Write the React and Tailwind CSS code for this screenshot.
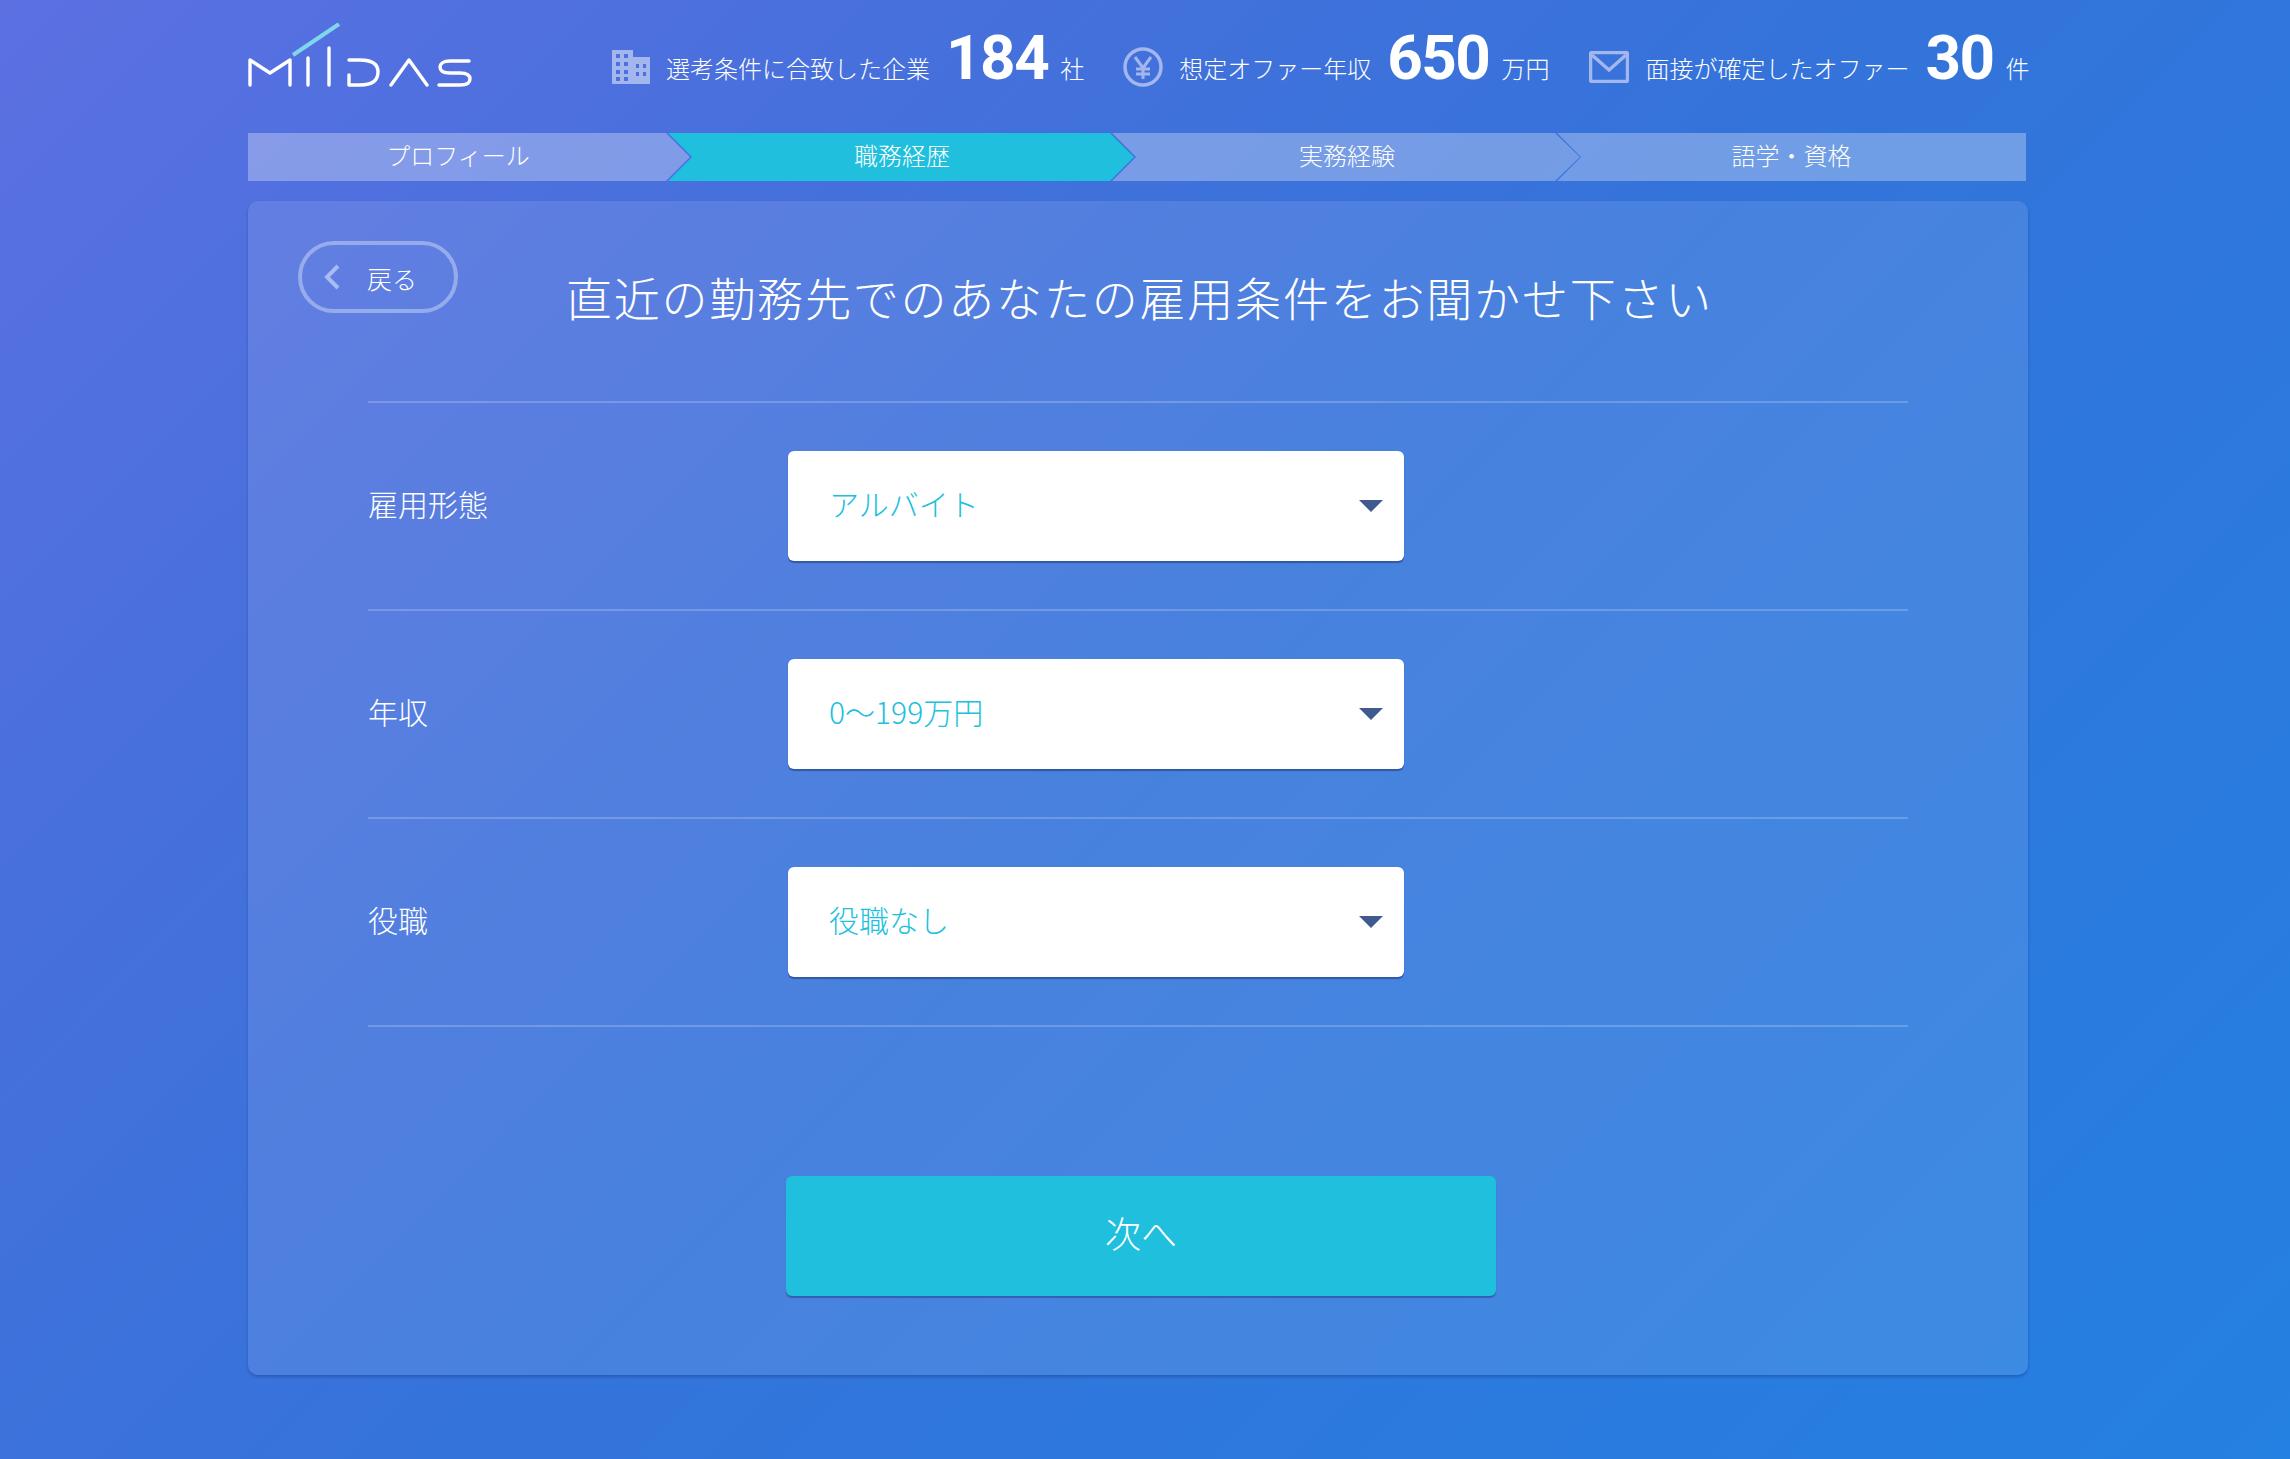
import React from 'react';

const steps = [
    { label: 'プロフィール', className: 'w-[444px] bg-white/30 pr-[24px] [clip-path:polygon(0_0,418px_0,442px_50%,418px_100%,0_100%)]' },
    { label: '職務経歴', className: 'w-[468px] -ml-[24px] bg-[#20bfdd] [clip-path:polygon(0_0,442px_0,466px_50%,442px_100%,0_100%,24px_50%)]' },
    { label: '実務経験', className: 'w-[470px] -ml-[24px] bg-white/30 [clip-path:polygon(0_0,443px_0,468px_50%,443px_100%,0_100%,24px_50%)]' },
    { label: '語学・資格', className: 'w-[469px] -ml-[25px] bg-white/30 [clip-path:polygon(0_0,100%_0,100%_100%,0_100%,24px_50%)]' },
];

const rows = [
    { label: '雇用形態', value: 'アルバイト' },
    { label: '年収', value: '0〜199万円' },
    { label: '役職', value: '役職なし' },
];

const Logo = () => (
    <svg width="226" height="64" viewBox="0 0 226 64" fill="none" className="block">
        <path d="M45 32 L91 1" stroke="#7fd6ee" strokeWidth="4" />
        <g stroke="#fff" strokeWidth="3.4" strokeLinecap="round" strokeLinejoin="round">
            <path d="M2 62 V37 L22 50 L42 37 V62" />
            <path d="M60 35 V62" />
            <path d="M81 25 V62" />
            <path d="M101 37 H112 C125 37 130 42 130 49 C130 57 125 62 112 62 H101 V52" />
            <path d="M143 62 L161 37 L179 62" />
            <path d="M221 38 H202 C195 38 192 41 192 44 C192 48 195 50 202 50 H212 C219 50 222 52 222 56 C222 60 218 62 212 62 H191" />
        </g>
    </svg>
);

const BuildingIcon = () => (
    <svg width="38" height="34" viewBox="0 0 38 34" className="block">
        <path fillRule="evenodd" fill="#a3b6ee" d="M0 0 H21 V7 H38 V34 H0 Z M4 4 V8 H8 V4 Z M12 4 V8 H16 V4 Z M4 12 V16 H8 V12 Z M12 12 V16 H16 V12 Z M4 20 V24 H8 V20 Z M12 20 V24 H16 V20 Z M4 27 V31 H8 V27 Z M12 27 V31 H16 V27 Z M24 14 V18 H27 V14 Z M31 14 V18 H34 V14 Z M24 22 V26 H27 V22 Z M31 22 V26 H34 V22 Z" />
    </svg>
);

const YenIcon = () => (
    <svg width="40" height="40" viewBox="0 0 40 40" fill="none" stroke="#a3b6ee" className="block">
        <circle cx="20" cy="20" r="18" strokeWidth="3.5" />
        <path d="M12 10 L20 21 L28 10 M20 21 V32 M13 22 H27 M13 27 H27" strokeWidth="3" />
    </svg>
);

const MailIcon = () => (
    <svg width="40" height="32" viewBox="0 0 40 32" fill="none" stroke="#a3b6ee" className="block">
        <rect x="1.5" y="1.5" width="37" height="29" rx="2" strokeWidth="3.5" />
        <path d="M3 4 L20 19 L37 4" strokeWidth="3.5" />
    </svg>
);

const Stat = ({ icon, label, value, unit, className }) => (
    <div className={`flex shrink-0 items-center whitespace-nowrap ${className}`}>
        {icon}
        <span className="ml-[16px] mt-[1px] text-[24px] leading-[32px] font-light">{label}</span>
        <span className="ml-[16px] -mt-[18px] font-['Roboto',sans-serif] text-[62px] leading-[70px] font-bold tracking-[-1.5px]">{value}</span>
        <span className="ml-[12px] mt-[2px] text-[24px] leading-[32px] font-light">{unit}</span>
    </div>
);

const App = () => {
    return (
        <div className="min-h-[1459px] bg-[linear-gradient(135deg,#5c70e2_0%,#4770dc_25%,#3473da_50%,#2480e2_100%)] font-['Noto_Sans_CJK_JP',sans-serif] text-white">
            <div className="ml-[248px] w-[1780px]">
                <header className="flex h-[133px] items-start">
                    <div className="mt-[23px]">
                        <Logo />
                    </div>
                    <div className="ml-[138px] mt-[41px] flex items-center">
                        <Stat icon={<BuildingIcon />} label="選考条件に合致した企業" value="184" unit="社" />
                        <Stat className="ml-[39px]" icon={<YenIcon />} label="想定オファー年収" value="650" unit="万円" />
                        <Stat className="ml-[40px]" icon={<MailIcon />} label="面接が確定したオファー" value="30" unit="件" />
                    </div>
                </header>

                <nav className="flex h-[48px]">
                    {steps.map((step) => (
                        <div key={step.label} className={`flex items-center justify-center pb-[5px] text-[24px] font-light ${step.className}`}>
                            {step.label}
                        </div>
                    ))}
                </nav>

                <main className="mt-[20px] h-[1174px] rounded-[10px] bg-white/10 shadow-[0_2px_3px_rgba(30,60,140,0.45)]">
                    <div className="relative px-[120px] pt-[40px]">
                        <button type="button" className="absolute left-[50px] top-[40px] flex h-[72px] w-[160px] items-center rounded-full border-[4px] border-white/35 pl-[21px]">
                            <svg width="18" height="26" viewBox="0 0 18 26" fill="none" stroke="#a9bbf0" strokeWidth="4" className="block">
                                <path d="M15 2 L4 13 L15 24" />
                            </svg>
                            <span className="ml-[26px] mt-[4px] text-[25px] font-light">戻る</span>
                        </button>

                        <h1 className="mt-[22px] pl-[3px] text-center text-[46px] leading-[66px] font-light tracking-[1.8px]">
                            直近の勤務先でのあなたの雇用条件をお聞かせ下さい
                        </h1>

                        <div className="mt-[72px] border-t-2 border-white/20">
                            {rows.map((row) => (
                                <div key={row.label} className="flex h-[208px] items-center border-b-2 border-white/20">
                                    <div className="w-[420px] pb-[5px] text-[30px] font-light">{row.label}</div>
                                    <div className="flex h-[110px] w-[616px] items-center justify-between rounded-[6px] bg-white pl-[41px] pr-[21px] shadow-[0_2px_1px_rgba(40,70,140,0.7)]">
                                        <span className="pb-[5px] text-[30px] font-light text-[#20bfdd]">{row.value}</span>
                                        <span className="h-0 w-0 border-x-[12px] border-t-[12px] border-x-transparent border-t-[#3f5a8f]" />
                                    </div>
                                </div>
                            ))}
                        </div>

                        <div className="mt-[149px] flex justify-center pl-[6px]">
                            <button type="button" className="h-[120px] w-[710px] rounded-[6px] bg-[#20bfdd] pb-[9px] text-[36px] font-light shadow-[0_2px_1px_rgba(50,90,170,0.9)]">
                                次へ
                            </button>
                        </div>
                    </div>
                </main>
            </div>
        </div>
    );
};

export default App;
